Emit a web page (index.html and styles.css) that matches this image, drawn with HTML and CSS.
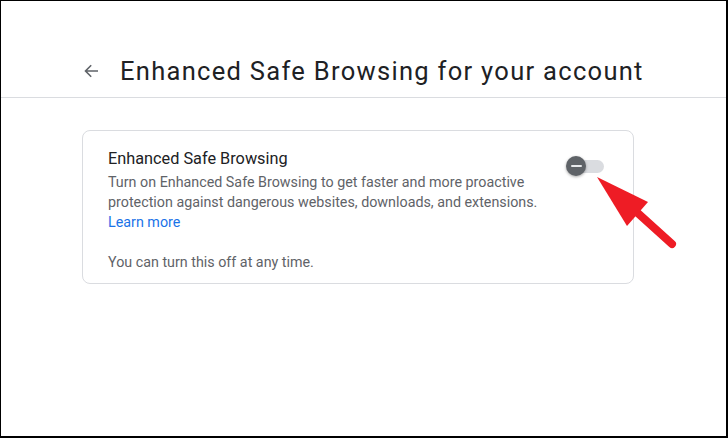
FILE: index.html
```html
<!DOCTYPE html>
<html lang="en">
<head>
<meta charset="utf-8">
<title>Enhanced Safe Browsing for your account</title>
<link rel="stylesheet" href="styles.css">
</head>
<body>
<div class="frame">
  <header class="header">
    <button class="back" aria-label="Back">
      <svg width="16" height="16" viewBox="0 0 16 16"><path d="M15 8H2.5M8.2 2.3L2.5 8l5.7 5.7" fill="none" stroke="#5f6368" stroke-width="1.6"/></svg>
    </button>
    <h1 class="title">Enhanced Safe Browsing for your account</h1>
  </header>
  <main class="content">
    <section class="card">
      <div class="card-text">
        <div class="card-title">Enhanced Safe Browsing</div>
        <p class="desc">Turn on Enhanced Safe Browsing to get faster and more proactive protection against dangerous websites, downloads, and extensions.</p>
        <a class="link" href="#">Learn more</a>
        <p class="note">You can turn this off at any time.</p>
      </div>
      <div class="toggle" role="switch" aria-checked="false">
        <span class="track"></span>
        <span class="knob"><span class="minus"></span></span>
      </div>
      <svg class="pointer" width="100" height="90" viewBox="0 0 100 90">
        <line x1="36" y1="35" x2="88" y2="82" stroke="#ee1c25" stroke-width="8" stroke-linecap="round"/>
        <polygon points="13,15 64,40 43,64" fill="#ee1c25"/>
      </svg>
    </section>
  </main>
</div>
</body>
</html>
```

FILE: styles.css
```css
* { box-sizing: border-box; }
html, body { margin: 0; padding: 0; background: #fff; }
body { font-family: Roboto, "Noto Sans", Arial, sans-serif; color: #202124; }

.frame {
  width: 728px;
  height: 438px;
  border-style: solid;
  border-color: #000;
  border-width: 1px 2px 2px 1px;
  background: #fff;
  overflow: hidden;
}

.header {
  height: 97px;
  border-bottom: 1px solid #dadce0;
  display: flex;
  align-items: center;
  padding: 44px 0 0 82px;
  gap: 21px;
}

.back {
  border: 0;
  background: none;
  padding: 0;
  width: 16px;
  height: 16px;
  display: flex;
}

.title {
  margin: 0;
  font-size: 25.5px;
  font-weight: 400;
  color: #202124;
  letter-spacing: 1.3px;
}

.content { padding: 32px 0 0 81px; }

.card {
  position: relative;
  width: 552px;
  height: 154px;
  border: 1px solid #dadce0;
  border-radius: 8px;
  display: flex;
  justify-content: space-between;
  padding: 17px 30px 0 25px;
}

.card-text { width: 450px; }

.card-title {
  font-size: 16.3px;
  line-height: 22px;
  margin-bottom: 2px;
  color: #202124;
}

.desc {
  margin: 0;
  font-size: 14.3px;
  line-height: 20px;
  color: #5f6368;
}

.link {
  display: block;
  font-size: 14.3px;
  line-height: 20px;
  color: #1a73e8;
  text-decoration: none;
}

.note {
  margin: 20px 0 0;
  font-size: 14.3px;
  line-height: 20px;
  color: #5f6368;
}

.toggle {
  position: relative;
  width: 38px;
  height: 20px;
  margin-top: 8px;
  margin-right: -1px;
}

.track {
  position: absolute;
  left: 10px;
  top: 4px;
  width: 28px;
  height: 13px;
  border-radius: 7px;
  background: #dadce0;
}

.knob {
  position: absolute;
  left: 0;
  top: 0;
  width: 20px;
  height: 20px;
  border-radius: 50%;
  background: #5f6368;
  box-shadow: 0 1px 3px rgba(0,0,0,0.35);
  display: flex;
  align-items: center;
  justify-content: center;
}

.minus {
  width: 11px;
  height: 2px;
  border-radius: 1px;
  background: #e8eaed;
}

.pointer {
  position: absolute;
  left: 501px;
  top: 31px;
}
```
